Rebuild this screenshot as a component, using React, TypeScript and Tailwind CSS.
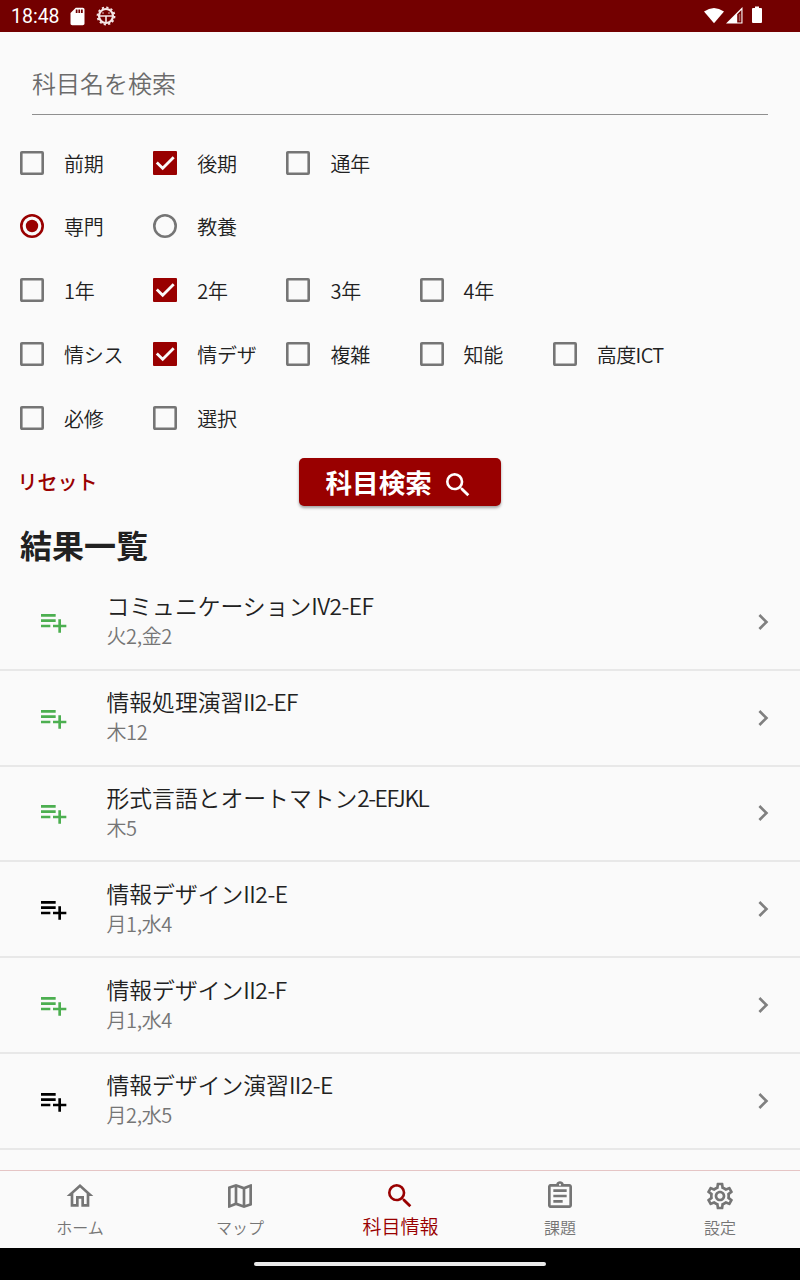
import { MdPlaylistAdd, MdChevronRight, MdSearch, MdOutlineHome, MdOutlineMap, MdOutlineAssignment, MdOutlineSettings, MdSdCard } from "react-icons/md";
import type { ReactNode } from "react";

type Option = { label: string; on?: boolean };

const checkRows: { radio?: boolean; items: Option[] }[] = [
  { items: [{ label: "前期" }, { label: "後期", on: true }, { label: "通年" }] },
  { radio: true, items: [{ label: "専門", on: true }, { label: "教養" }] },
  { items: [{ label: "1年" }, { label: "2年", on: true }, { label: "3年" }, { label: "4年" }] },
  { items: [{ label: "情シス" }, { label: "情デザ", on: true }, { label: "複雑" }, { label: "知能" }, { label: "高度ICT" }] },
  { items: [{ label: "必修" }, { label: "選択" }] },
];

const results = [
  { title: "コミュニケーション", code: "IV2-EF", time: "火2,金2", green: true, tracking: "tracking-[-0.55px]" },
  { title: "情報処理演習", code: "II2-EF", time: "木12", green: true, tracking: "tracking-[-0.8px]" },
  { title: "形式言語とオートマトン", code: "2-EFJKL", time: "木5", green: true, tracking: "tracking-[-1.5px]" },
  { title: "情報デザイン", code: "II2-E", time: "月1,水4", green: false, tracking: "tracking-[-0.5px]" },
  { title: "情報デザイン", code: "II2-F", time: "月1,水4", green: true, tracking: "tracking-[-0.5px]" },
  { title: "情報デザイン演習", code: "II2-E", time: "月2,水5", green: false, tracking: "tracking-[-0.6px]" },
];

function Box({ on }: { on?: boolean }) {
  return on ? (
    <svg className="size-6 shrink-0" viewBox="0 0 24 24">
      <rect width="24" height="24" rx="1" fill="#990000" />
      <path d="M3.8 11.5 L9.7 17.3 L20.7 6.2" fill="none" stroke="#fafafa" strokeWidth="2.8" />
    </svg>
  ) : (
    <svg className="size-6 shrink-0" viewBox="0 0 24 24">
      <rect x="1.3" y="1.3" width="21.4" height="21.4" rx="0.6" fill="none" stroke="#757575" strokeWidth="2.6" />
    </svg>
  );
}

function Radio({ on }: { on?: boolean }) {
  return (
    <svg className="size-6 shrink-0" viewBox="0 0 24 24">
      <circle cx="12" cy="12" r="10.7" fill="none" stroke={on ? "#990000" : "#757575"} strokeWidth="2.6" />
      {on && <circle cx="12" cy="12" r="6.2" fill="#990000" />}
    </svg>
  );
}

function StatusBar() {
  return (
    <header className="flex h-8 shrink-0 items-center bg-[#730000] pl-[11px] text-white">
      <span className="w-[56px] pt-px font-[Roboto] text-[19.5px] font-normal leading-8">18:48</span>
      <MdSdCard className="h-[21px] w-[21px]" />
      <svg className="ml-[8px] size-5" viewBox="0 0 20 20" fill="none" stroke="#f5e6e6">
        <circle cx="10" cy="10" r="7" strokeWidth="2.2" />
        <circle cx="10" cy="10" r="8.5" strokeWidth="1.8" strokeDasharray="2.2 2.25" />
        <path d="M3 10h14M10 10v7M7 6.5v1M13 6.5v1" strokeWidth="1.6" />
      </svg>
      <svg className="ml-auto mr-[36px] h-5 w-[62px]" viewBox="0 0 62 20">
        <path d="M2 5.6 Q12 -1.8 22 5.6 L12 17.2z" fill="#fff" />
        <path d="M24 17.5 L40.5 1 V17.5z" fill="#fff" />
        <path d="M35.2 8.2 L39.4 4 V16.4 H35.2z" fill="#730000" />
        <path d="M36.8 8 h1.5 v7.2 h-1.5z" fill="#fff" fillOpacity="0.35" />
        <path d="M53 2 V.5 h4 V2 H59 q1 0 1 1 V16 q0 1 -1 1 H51 q-1 0 -1 -1 V3 q0 -1 1 -1z" fill="#fff" />
      </svg>
    </header>
  );
}

function Tab({ icon, label, active }: { icon: ReactNode; label: string; active?: boolean }) {
  return (
    <div className={active ? "flex w-40 flex-col items-center pt-[9px] text-[#990000]" : "flex w-40 flex-col items-center pt-[9px] text-[#757575]"}>
      {icon}
      <span className={active ? "-mt-px pl-px text-[19px] leading-[30px]" : "text-[16px] leading-[30px]"}>{label}</span>
    </div>
  );
}

export default function App() {
  return (
    <div className="flex h-[1280px] w-[800px] flex-col overflow-hidden bg-[#fafafa] font-['Noto_Sans_CJK_JP',sans-serif] font-[350] text-[#212121]">
      <StatusBar />
      <main className="flex min-h-0 flex-1 flex-col overflow-hidden">
        <div className="mx-8 flex h-[83px] shrink-0 items-center border-b border-[#8f8f8f] pt-[19px] text-[24px] text-[#6b6b6b]">科目名を検索</div>
        <div className="mt-4 flex shrink-0 flex-col pl-5">
          {checkRows.map((row, i) => (
            <div key={i} className={row.radio ? "flex h-[63.8px] items-center pb-[2px]" : "flex h-[63.8px] items-center"}>
              {row.items.map((o) => (
                <div key={o.label} className="flex w-[133.2px] items-center gap-5 whitespace-nowrap text-[20px] leading-6">
                  {row.radio ? <Radio on={o.on} /> : <Box on={o.on} />}
                  <span className={o.label.endsWith("ICT") ? "pt-[2px] tracking-[-0.6px]" : "pt-[2px] tracking-[-0.2px]"}>{o.label}</span>
                </div>
              ))}
            </div>
          ))}
        </div>
        <div className="mt-2 flex h-12 shrink-0 items-center">
          <span className="w-[299px] pl-[17.5px] pt-px text-[20px] font-medium text-[#990000]">リセット</span>
          <button className="flex h-12 w-[202px] items-center rounded-[5px] bg-[#990000] pl-[26.5px] text-[26.6px] font-bold text-white shadow-[0_2px_3px_rgba(0,0,0,0.35)]">
            科目検索
            <MdSearch className="ml-[10px] mt-[6px] size-8" />
          </button>
        </div>
        <h1 className="mt-[14px] h-[55px] shrink-0 pl-5 text-[32px] font-bold leading-[48px]">結果一覧</h1>
        <ul className="shrink-0">
          {results.map((r) => (
            <li key={r.title + r.code} className="flex h-[95.8px] items-center border-b-2 border-[#e8e8e8] pl-[37px] pr-[21px]">
              <MdPlaylistAdd className={r.green ? "size-8 text-[#4caf50]" : "size-8 text-black"} />
              <div className="ml-[37.5px] flex-1 pb-[3px]">
                <div className="text-[22.8px] leading-[32px]">{r.title}<span className={r.tracking}>{r.code}</span></div>
                <div className="text-[20px] leading-[28px] tracking-[-0.4px] text-[#757575]">{r.time}</div>
              </div>
              <MdChevronRight className="size-8 text-[#808080]" />
            </li>
          ))}
        </ul>
      </main>
      <nav className="flex h-[78px] shrink-0 border-t border-[#e5c5c5]">
        <Tab icon={<MdOutlineHome className="size-8" />} label="ホーム" />
        <Tab icon={<MdOutlineMap className="size-8" />} label="マップ" />
        <Tab icon={<MdSearch className="size-8" />} label="科目情報" active />
        <Tab icon={<MdOutlineAssignment className="size-8" />} label="課題" />
        <Tab icon={<MdOutlineSettings className="size-8" />} label="設定" />
      </nav>
      <footer className="flex h-8 shrink-0 items-center justify-center bg-black">
        <div className="h-1 w-[292px] rounded-full bg-[#ebebeb]" />
      </footer>
    </div>
  );
}
